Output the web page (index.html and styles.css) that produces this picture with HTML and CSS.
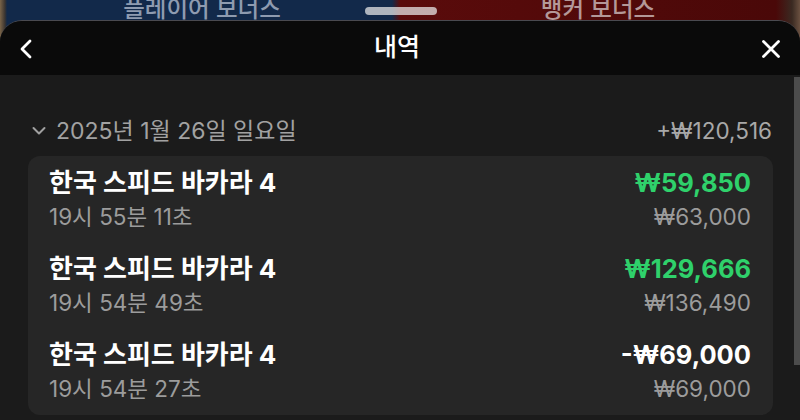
FILE: index.html
```html
<!DOCTYPE html>
<html lang="ko">
<head>
<meta charset="utf-8">
<title>내역</title>
<link rel="stylesheet" href="styles.css">
</head>
<body>
<div class="screen">
  <div class="backdrop">
    <div class="bk bk-left"><span>플레이어 보너스</span></div>
    <div class="bk bk-right"><span>뱅커 보너스</span></div>
  </div>
  <div class="handle"></div>
  <div class="sheet">
    <header class="sheet-head">
      <svg class="icon-back" width="14" height="20" viewBox="0 0 14 20"><path d="M11 2 L3 10 L11 18" fill="none" stroke="#fff" stroke-width="2.8" stroke-linecap="round" stroke-linejoin="round"/></svg>
      <h1 class="title">내역</h1>
      <svg class="icon-close" width="20" height="20" viewBox="0 0 20 20"><path d="M2.5 2.5 L17.5 17.5 M17.5 2.5 L2.5 17.5" fill="none" stroke="#fff" stroke-width="2.8" stroke-linecap="round"/></svg>
    </header>
    <div class="sheet-body">
      <div class="date-row">
        <div class="date-left">
          <svg class="icon-down" width="14" height="10" viewBox="0 0 14 10"><path d="M1.5 2 L7 7.5 L12.5 2" fill="none" stroke="#a0a0a0" stroke-width="2" stroke-linecap="round" stroke-linejoin="round"/></svg>
          <span class="date-text">2025년 1월 26일 일요일</span>
        </div>
        <span class="date-total">+₩120,516</span>
      </div>
      <div class="card">
        <div class="row">
          <div class="row-left">
            <div class="game">한국 스피드 바카라 4</div>
            <div class="time">19시 55분 11초</div>
          </div>
          <div class="row-right">
            <div class="amount win">₩59,850</div>
            <div class="bet">₩63,000</div>
          </div>
        </div>
        <div class="row">
          <div class="row-left">
            <div class="game">한국 스피드 바카라 4</div>
            <div class="time">19시 54분 49초</div>
          </div>
          <div class="row-right">
            <div class="amount win">₩129,666</div>
            <div class="bet">₩136,490</div>
          </div>
        </div>
        <div class="row">
          <div class="row-left">
            <div class="game">한국 스피드 바카라 4</div>
            <div class="time">19시 54분 27초</div>
          </div>
          <div class="row-right">
            <div class="amount loss">-₩69,000</div>
            <div class="bet">₩69,000</div>
          </div>
        </div>
      </div>
    </div>
    <div class="scrollbar"></div>
  </div>
</div>
</body>
</html>
```

FILE: styles.css
```css
* { box-sizing: border-box; }
html, body { margin: 0; padding: 0; }
body {
  width: 800px;
  height: 420px;
  overflow: hidden;
  background: #1a1a1a;
  font-family: "Inter", "Noto Sans CJK KR", sans-serif;
}
.screen {
  position: relative;
  width: 800px;
  height: 420px;
  overflow: hidden;
  background: linear-gradient(90deg, #7a6448 0, #3a3430 5px, #12294a 7px, #12294a 49%, #5a0b0b 50%, #4a0808 97%, #3a2a22 99%, #6a5040 100%);
}
.backdrop {
  display: grid;
  grid-template-columns: 396px 1fr;
  height: 20px;
}
.bk {
  display: flex;
  justify-content: center;
  overflow: hidden;
  height: 20px;
}
.bk span {
  display: block;
  font-size: 23.5px;
  line-height: 24px;
  margin-top: -3px;
  font-weight: 500;
}
.bk-left span { padding-left: 8px; color: #8e9bb0; }
.bk-right span { padding-left: 0; color: #b49898; }
.handle {
  position: absolute;
  left: 365px;
  top: 7px;
  width: 72px;
  height: 8px;
  border-radius: 4px;
  background: rgba(235, 235, 235, 0.72);
}
.sheet {
  position: relative;
  height: 400px;
  background: #1b1b1b;
  border-radius: 22px 22px 0 0;
  border-top: 1px solid #4a4a50;
  overflow: hidden;
}
.sheet-head {
  height: 54px;
  background: #0a0a0a;
  display: flex;
  align-items: center;
  justify-content: space-between;
  padding: 0 19px 0 19px;
}
.icon-back { margin-top: 1px; }
.icon-close { margin-top: 1px; }
.title {
  margin: 0;
  font-size: 25px;
  font-weight: 500;
  color: #ffffff;
  line-height: 30px;
  margin-top: -2px;
}
.sheet-body {
  padding: 41px 27px 0 28px;
}
.date-row {
  display: flex;
  justify-content: space-between;
  align-items: center;
  height: 30px;
  padding: 0 1px 0 4px;
  margin-bottom: 10px;
}
.date-left {
  display: flex;
  align-items: center;
  gap: 10px;
}
.date-text {
  font-size: 23px;
  color: #a2a2a2;
  line-height: 30px;
}
.date-total {
  font-size: 22.5px;
  color: #a8a8a8;
  line-height: 30px;
}
.card {
  background: #262626;
  border-radius: 12px;
  padding: 11px 22px 10px 21px;
  display: flex;
  flex-direction: column;
  gap: 20px;
}
.row {
  display: flex;
  justify-content: space-between;
}
.row-left, .row-right {
  display: flex;
  flex-direction: column;
  gap: 2px;
}
.row-right { align-items: flex-end; }
.game {
  font-size: 26px;
  font-weight: 700;
  color: #ffffff;
  line-height: 32px;
}
.time {
  font-size: 22.5px;
  color: #9c9c9c;
  line-height: 32px;
}
.amount {
  font-size: 25.5px;
  font-weight: 700;
  line-height: 32px;
}
.amount.win { color: #2fd16b; }
.amount.loss { color: #ffffff; }
.bet {
  font-size: 22.5px;
  color: #9c9c9c;
  line-height: 32px;
}
.scrollbar {
  position: absolute;
  right: 0;
  top: 56px;
  width: 6px;
  height: 288px;
  background: #4c4c4c;
}
```
